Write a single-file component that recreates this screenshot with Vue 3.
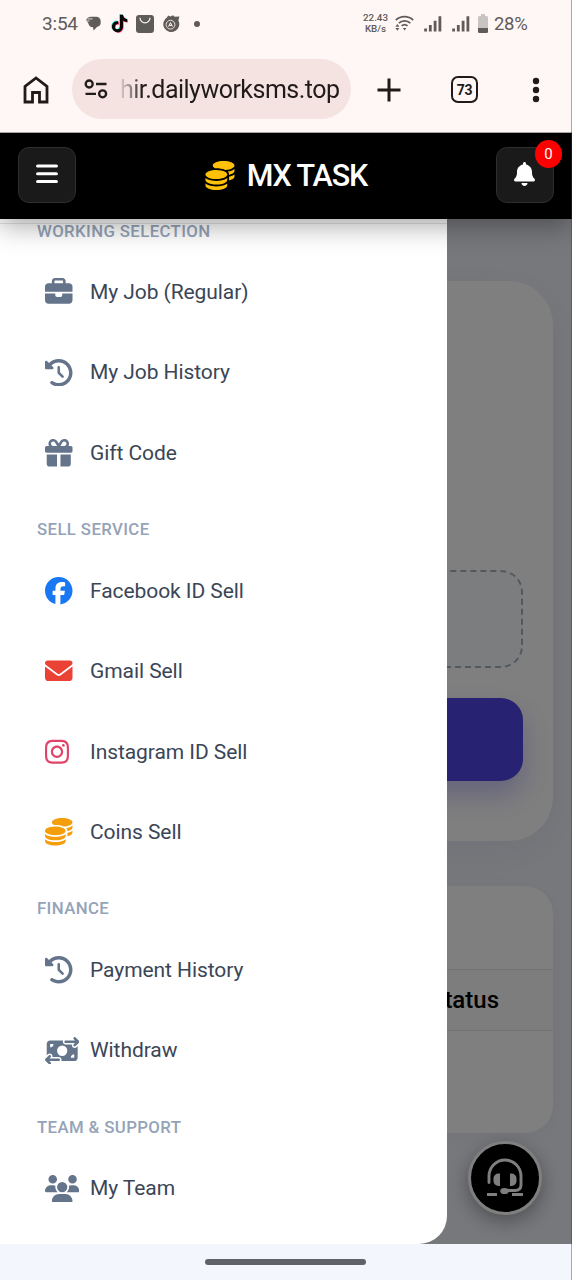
<script setup>
const icons = {
  briefcase: { w: 512, d: 'M184 48H328c4.4 0 8 3.6 8 8V96H176V56c0-4.4 3.6-8 8-8zm-56 8V96H64C28.7 96 0 124.7 0 160v96H192 320 512V160c0-35.3-28.7-64-64-64H384V56c0-30.9-25.1-56-56-56H184c-30.9 0-56 25.1-56 56zM512 288H320v32c0 17.7-14.3 32-32 32H224c-17.7 0-32-14.3-32-32V288H0V416c0 35.3 28.7 64 64 64H448c35.3 0 64-28.7 64-64V288z' },
  history: { w: 512, d: 'M75 75L41 41C25.9 25.9 0 36.6 0 57.9V168c0 13.3 10.7 24 24 24H134.1c21.4 0 32.1-25.9 17-41l-30.8-30.8C155 85.5 203 64 256 64c106 0 192 86 192 192s-86 192-192 192c-40.8 0-78.6-12.7-109.7-34.4c-14.5-10.1-34.4-6.6-44.6 7.9s-6.6 34.4 7.9 44.6C151.2 495 201.7 512 256 512c141.4 0 256-114.6 256-256S397.4 0 256 0C185.3 0 121.3 28.7 75 75zm181 53c-13.3 0-24 10.7-24 24V256c0 6.4 2.5 12.5 7 17l72 72c9.4 9.4 24.6 9.4 33.9 0s9.4-24.6 0-33.9l-65-65V152c0-13.3-10.7-24-24-24z' },
  gift: { w: 512, d: 'M190.5 68.8L225.3 128H224 152c-22.1 0-40-17.9-40-40s17.9-40 40-40h2.2c14.9 0 28.8 7.9 36.3 20.8zM64 88c0 14.4 3.5 28 9.6 40H32c-17.7 0-32 14.3-32 32v64c0 17.7 14.3 32 32 32H480c17.7 0 32-14.3 32-32V160c0-17.7-14.3-32-32-32H438.4c6.1-12 9.6-25.6 9.6-40c0-48.6-39.4-88-88-88h-2.2c-31.9 0-61.5 16.9-77.7 44.4L256 85.5l-24.1-41C215.7 16.9 186.1 0 154.2 0H152C103.4 0 64 39.4 64 88zm336 0c0 22.1-17.9 40-40 40H288h-1.3l34.8-59.2C329.1 55.9 342.9 48 357.8 48H360c22.1 0 40 17.9 40 40zM32 288V464c0 26.5 21.5 48 48 48H224V288H32zM288 512H432c26.5 0 48-21.5 48-48V288H288V512z' },
  facebook: { w: 512, d: 'M512 256C512 114.6 397.4 0 256 0S0 114.6 0 256C0 376 82.7 476.8 194.2 504.5V334.2H141.4V256h52.8V222.3c0-87.1 39.4-127.5 125-127.5c16.2 0 44.2 3.2 55.7 6.4V172c-6-.6-16.5-1-29.6-1c-42 0-58.2 15.9-58.2 57.2V256h83.6l-14.4 78.2H287V510.1C413.8 494.8 512 386.9 512 256h0z' },
  envelope: { w: 512, d: 'M48 64C21.5 64 0 85.5 0 112c0 15.1 7.1 29.3 19.2 38.4L236.8 313.6c11.4 8.5 27 8.5 38.4 0L492.8 150.4c12.1-9.1 19.2-23.3 19.2-38.4c0-26.5-21.5-48-48-48H48zM0 176V384c0 35.3 28.7 64 64 64H448c35.3 0 64-28.7 64-64V176L294.4 339.2c-22.8 17.1-54 17.1-76.8 0L0 176z' },
  instagram: { w: 448, d: 'M224.1 141c-63.6 0-114.9 51.3-114.9 114.9s51.3 114.9 114.9 114.9S339 319.5 339 255.9 287.7 141 224.1 141zm0 189.6c-41.1 0-74.7-33.5-74.7-74.7s33.5-74.7 74.7-74.7 74.7 33.5 74.7 74.7-33.6 74.7-74.7 74.7zm146.4-194.3c0 14.9-12 26.8-26.8 26.8-14.9 0-26.8-12-26.8-26.8s12-26.8 26.8-26.8 26.8 12 26.8 26.8zm76.1 27.2c-1.7-35.9-9.9-67.7-36.2-93.9-26.2-26.2-58-34.4-93.9-36.2-37-2.1-147.9-2.1-184.9 0-35.8 1.7-67.6 9.9-93.9 36.1s-34.4 58-36.2 93.9c-2.1 37-2.1 147.9 0 184.9 1.7 35.9 9.9 67.7 36.2 93.9s58 34.4 93.9 36.2c37 2.1 147.9 2.1 184.9 0 35.9-1.7 67.7-9.9 93.9-36.2 26.2-26.2 34.4-58 36.2-93.9 2.1-37 2.1-147.8 0-184.8zM398.8 388c-7.8 19.6-22.9 34.7-42.6 42.6-29.5 11.7-99.5 9-132.1 9s-102.7 2.6-132.1-9c-19.6-7.8-34.7-22.9-42.6-42.6-11.7-29.5-9-99.5-9-132.1s-2.6-102.7 9-132.1c7.8-19.6 22.9-34.7 42.6-42.6 29.5-11.7 99.5-9 132.1-9s102.7-2.6 132.1 9c19.6 7.8 34.7 22.9 42.6 42.6 11.7 29.5 9 99.5 9 132.1s2.7 102.7-9 132.1z' },
  coins: { w: 512, d: 'M512 80c0 18-14.3 34.6-38.4 48c-29.1 16.1-72.5 27.5-122.3 30.9c-3.7-1.8-7.4-3.5-11.3-5C300.6 137.4 248.2 128 192 128c-8.3 0-16.4 .2-24.5 .6l-1.1-.6C142.3 114.6 128 98 128 80c0-44.2 86-80 192-80S512 35.8 512 80zM160.7 161.1c10.2-.7 20.7-1.1 31.3-1.1c62.2 0 117.4 12.3 152.5 31.4C369.3 204.9 384 221.7 384 240c0 4-.7 7.9-2.1 11.7c-4.6 13.2-17 25.3-35 35.5c-.4 .2-.9 .4-1.3 .7c-35 19.4-90.8 32-153.6 32c-59.6 0-112.9-11.3-148.2-29.1c-1.9-.9-3.7-1.9-5.5-2.9C14.3 274.6 0 258 0 240c0-34.8 53.4-64.5 128-75.4c10.5-1.5 21.4-2.7 32.7-3.5zM416 240c0-21.9-10.6-39.9-24.1-53.4c28.3-4.4 54.2-11.4 76.2-20.5c16.3-6.8 31.5-15.2 43.9-25.5V176c0 19.3-16.5 37.1-43.8 50.9c-14.6 7.4-32.4 13.7-52.4 18.5c.1-1.8 .2-3.5 .2-5.3zm-32 96c0 18-14.3 34.6-38.4 48c-1.8 1-3.6 1.9-5.5 2.9C304.9 404.7 251.6 416 192 416c-62.8 0-118.6-12.6-153.6-32C14.3 370.6 0 354 0 336V300.6c12.5 10.3 27.6 18.7 43.9 25.5C83.4 342.6 135.8 352 192 352s108.6-9.4 148.1-25.9c7.8-3.2 15.3-6.9 22.4-10.9c6.1-3.4 11.8-7.2 17.2-11.2c1.5-1.1 2.9-2.3 4.3-3.4V304v5.7V336zm32 0V304 278.1c19-4.2 36.5-9.5 52.1-16c16.3-6.8 31.5-15.2 43.9-25.5V272c0 10.5-5 21-14.9 30.9c-16.3 16.3-45 29.7-81.3 38.4c.1-1.7 .2-3.5 .2-5.3zM192 448c56.2 0 108.6-9.4 148.1-25.9c16.3-6.8 31.5-15.2 43.9-25.5V432c0 44.2-86 80-192 80S0 476.2 0 432V396.6c12.5 10.3 27.6 18.7 43.9 25.5C83.4 438.6 135.8 448 192 448z' },
  transfer: { w: 640, d: 'M535 41c-9.4-9.4-9.4-24.6 0-33.9s24.6-9.4 33.9 0l64 64c4.5 4.5 7 10.6 7 17s-2.5 12.5-7 17l-64 64c-9.4 9.4-24.6 9.4-33.9 0s-9.4-24.6 0-33.9l23-23L384 112c-13.3 0-24-10.7-24-24s10.7-24 24-24l174.1 0L535 41zM105 377l-23 23L256 400c13.3 0 24 10.7 24 24s-10.7 24-24 24L81.9 448l23 23c9.4 9.4 9.4 24.6 0 33.9s-24.6 9.4-33.9 0L7 441c-4.5-4.5-7-10.6-7-17s2.5-12.5 7-17l64-64c9.4-9.4 24.6-9.4 33.9 0s9.4 24.6 0 33.9zM96 64H337.9c-3.7 7.2-5.9 15.3-5.9 24c0 28.7 23.3 52 52 52l117.4 0c-4 17 .6 35.5 13.8 48.8c20.3 20.3 53.2 20.3 73.5 0L608 169.5V384c0 35.3-28.7 64-64 64H302.1c3.7-7.2 5.9-15.3 5.9-24c0-28.7-23.3-52-52-52l-117.4 0c4-17-.6-35.5-13.8-48.8c-20.3-20.3-53.2-20.3-73.5 0L32 342.5V128c0-35.3 28.7-64 64-64zm64 64H96v64c35.3 0 64-28.7 64-64zM544 320c-35.3 0-64 28.7-64 64h64V320zM320 352a96 96 0 1 0 0-192 96 96 0 1 0 0 192z' },
  users: { w: 640, d: 'M144 0a80 80 0 1 1 0 160A80 80 0 1 1 144 0zM512 0a80 80 0 1 1 0 160A80 80 0 1 1 512 0zM0 298.7C0 239.8 47.8 192 106.7 192h42.7c15.9 0 31 3.5 44.6 9.7c-1.3 7.2-1.9 14.7-1.9 22.3c0 38.2 16.8 72.5 43.3 96c-.2 0-.4 0-.7 0H21.3C9.6 320 0 310.4 0 298.7zM405.3 320c-.2 0-.4 0-.7 0c26.6-23.5 43.3-57.8 43.3-96c0-7.6-.7-15-1.9-22.3c13.6-6.3 28.7-9.7 44.6-9.7h42.7C592.2 192 640 239.8 640 298.7c0 11.8-9.6 21.3-21.3 21.3H405.3zM224 224a96 96 0 1 1 192 0 96 96 0 1 1 -192 0zM128 485.3C128 411.7 187.7 352 261.3 352H378.7C452.3 352 512 411.7 512 485.3c0 14.7-11.9 26.7-26.7 26.7H154.7c-14.7 0-26.7-11.9-26.7-26.7z' },
}

const tiktok = 'M448 209.9a210.1 210.1 0 0 1 -122.8-39.3V349.4A162.6 162.6 0 1 1 185 188.3V278.2a74.6 74.6 0 1 0 52.2 71.2V0l88 0a121.2 121.2 0 0 0 1.9 22.2h0A122.2 122.2 0 0 0 381 102.4a121.4 121.4 0 0 0 67 20.1z'

const groups = [
  { title: 'WORKING SELECTION', items: [
    { label: 'My Job (Regular)', icon: 'briefcase', tone: 'slate' },
    { label: 'My Job History', icon: 'history', tone: 'slate' },
    { label: 'Gift Code', icon: 'gift', tone: 'slate' },
  ] },
  { title: 'SELL SERVICE', items: [
    { label: 'Facebook ID Sell', icon: 'facebook', tone: 'blue' },
    { label: 'Gmail Sell', icon: 'envelope', tone: 'red' },
    { label: 'Instagram ID Sell', icon: 'instagram', tone: 'pink' },
    { label: 'Coins Sell', icon: 'coins', tone: 'amber' },
  ] },
  { title: 'FINANCE', items: [
    { label: 'Payment History', icon: 'history', tone: 'slate' },
    { label: 'Withdraw', icon: 'transfer', tone: 'slate' },
  ] },
  { title: 'TEAM & SUPPORT', items: [
    { label: 'My Team', icon: 'users', tone: 'slate' },
  ] },
]
</script>

<template>
  <div class="screen">
    <div class="status">
      <span class="clock">3:54</span>
      <svg class="s-chat" viewBox="0 0 15 15"><path d="M5 .8h5.200a4.500 4.500 0 0 1 4.500 4.500v1.200a4.500 4.500 0 0 1-3.700 4.400L7.600 14.600 7 11.200A4.600 4.600 0 0 1 2.400 7.500L.3 4.200C.6 2.200 2.600.8 5 .8z" fill="#5f5b58" /><path d="M1 5h2.500M1.500 2.900h5" stroke="#fff7f5" stroke-width=".8" /></svg>
      <svg class="s-tiktok" viewBox="-24 -24 496 560"><path :d="tiktok" fill="#25e5dc" transform="translate(-18 -16)" /><path :d="tiktok" fill="#f8265a" transform="translate(18 16)" /><path :d="tiktok" fill="#080808" /></svg>
      <svg class="s-bag" viewBox="0 0 18 18"><rect width="18" height="18" rx="3" fill="#5f5b58" /><path d="M4 2.800a5 5 0 0 0 10 0" fill="none" stroke="#fff7f5" stroke-width="1.200" /></svg>
      <svg class="s-ring" viewBox="0 0 18 18"><path d="M5.200 2.200L6 .4l2.500 1L11 .2l1.600 1.600 4.800-.4-1 4a8 8 0 1 1-11.200-3.200z" fill="#5f5b58" /><circle cx="8.500" cy="9.700" r="4.400" fill="none" stroke="#e8dfdc" stroke-width="1" /><path d="M6.600 11.600l1.900-4 1.900 4M7.200 10.400h2.600" fill="none" stroke="#fff7f5" stroke-width="1" /></svg>
      <span class="s-dot"></span>
      <span class="spacer"></span>
      <span class="speed"><span>22.43</span><span>KB/s</span></span>
      <svg class="s-wifi" viewBox="0 0 19 17"><g fill="none" stroke="#5f5b58" stroke-width="1.700"><path d="M.8 5.200a12.500 12.500 0 0 1 17.400 0" /><path d="M3.800 8.200a8.500 8.500 0 0 1 11.600 0" /><path d="M6.600 10.900a4.500 4.500 0 0 1 6 0" /></g><path d="M7.800 13h3.600l-1.800 2.400zM.4 11.700l2-2.700 2 2.700zM.4 13l2 2.800 2-2.800z" fill="#5f5b58" /></svg>
      <svg v-for="n in 2" :key="n" class="s-signal" viewBox="0 0 18 16"><path d="M.2 12.400h2.800V15.500H.2zM4.900 9h2.800v6.500H4.900zM9.700 4.800h2.800v10.700H9.700zM14.500.3h2.800v15.200h-2.800z" fill="#5f5b58" /></svg>
      <svg class="s-battery" viewBox="0 0 10 19"><path d="M3 0h4v2h1.500q1.500 0 1.500 1.500v14q0 1.500-1.500 1.500h-7Q0 19 0 17.500v-14Q0 2 1.500 2H3z" fill="#c9c3c1" /><path d="M0 14h10v3.500q0 1.500-1.500 1.500h-7Q0 19 0 17.500z" fill="#5f5b58" /></svg>
      <span class="percent">28%</span>
    </div>

    <div class="toolbar">
      <svg class="t-home" viewBox="0 0 26 28"><path d="M2 26V10.500L13 2l11 8.500V26h-7.500v-9.500h-7V26z" fill="none" stroke="#201a19" stroke-width="2.800" /></svg>
      <div class="omnibox">
        <svg class="t-tune" viewBox="0 0 24 20"><g fill="none" stroke="#201a19" stroke-width="2.300"><circle cx="5.200" cy="5" r="3.500" /><path d="M12 5h10.500M1.500 14.800H12" /><circle cx="18.600" cy="14.800" r="3.500" /></g></svg>
        <span class="url">hir.dailyworksms.top</span>
      </div>
      <svg class="t-plus" viewBox="0 0 24 24"><path d="M12 .5v23M.5 12h23" stroke="#201a19" stroke-width="3" /></svg>
      <span class="tabs">73</span>
      <svg class="t-more" viewBox="0 0 8 26"><g fill="#201a19"><circle cx="4" cy="4" r="3.200" /><circle cx="4" cy="13" r="3.200" /><circle cx="4" cy="22" r="3.200" /></g></svg>
    </div>

    <header class="header">
      <button class="square">
        <svg class="h-bars" viewBox="0 0 22 20"><path d="M1.600 2h18.800M1.600 9.800h18.800M1.600 17.500h18.800" stroke="#fff" stroke-width="3.100" stroke-linecap="round" /></svg>
      </button>
      <div class="brand">
        <svg class="h-coins" viewBox="0 0 512 512"><path :d="icons.coins.d" /></svg>
        <span>MX TASK</span>
      </div>
      <button class="square">
        <svg class="h-bell" viewBox="0 0 448 512"><path d="M224 0c-17.700 0-32 14.300-32 32V51.200C119 66 64 130.600 64 208v18.800c0 47-17.300 92.400-48.500 127.600l-7.400 8.300c-8.400 9.400-10.400 22.900-5.300 34.400S19.400 416 32 416H416c12.600 0 24-7.400 29.200-18.900s3.100-25-5.300-34.400l-7.400-8.300C401.300 319.200 384 273.900 384 226.800V208c0-77.400-55-142-128-156.800V32c0-17.700-14.300-32-32-32zm45.300 493.300c12-12 18.700-28.300 18.700-45.300H160c0 17 6.700 33.300 18.700 45.300s28.300 18.700 45.300 18.700s33.300-6.700 45.300-18.700z" fill="#fff" /></svg>
        <span class="badge">0</span>
      </button>
    </header>

    <main class="content">
      <section class="card form-card">
        <div class="dropzone"></div>
        <div class="submit"></div>
      </section>
      <section class="card table-card">
        <div class="table-title"></div>
        <div class="table-head"><span>Status</span></div>
      </section>
      <div class="support">
        <svg viewBox="0 0 38 40"><g fill="none" stroke="#fff" stroke-width="2.900"><path d="M3 24.500V18a16 16 0 0 1 32 0v9q0 5.500-6 5.500H19" stroke-linecap="round" /><path d="M1 36.500h10M26 36.500h11" stroke-width="3" /></g><path d="M14 15.500v12.500h-1.500a5 5 0 0 1-5-5v-2.500a5 5 0 0 1 5-5zM24 15.500v12.500h1.500a5 5 0 0 0 5-5v-2.500a5 5 0 0 0-5-5z" fill="#fff" /><ellipse cx="18.500" cy="33" rx="4.300" ry="3.100" fill="#fff" /></svg>
      </div>
      <div class="scrim"></div>
      <aside class="drawer">
        <div class="drawer-edge"></div>
        <nav class="menu">
          <div v-for="g in groups" :key="g.title">
            <h3>{{ g.title }}</h3>
            <a v-for="i in g.items" :key="i.label" class="item">
              <span class="icon" :class="i.tone">
                <svg :class="'w' + icons[i.icon].w" :viewBox="`0 0 ${icons[i.icon].w} 512`"><path :d="icons[i.icon].d" /></svg>
              </span>
              <span class="label">{{ i.label }}</span>
            </a>
          </div>
        </nav>
      </aside>
    </main>

    <footer class="gesture"><span></span></footer>
    <div class="edge"></div>
  </div>
</template>

<style>
body { margin: 0; }
</style>

<style scoped>
.screen { position: relative; width: 572px; height: 1280px; display: flex; flex-direction: column; overflow: hidden; font-family: Roboto, sans-serif; background: #fff7f5; }
.screen * { box-sizing: border-box; }
svg { display: block; flex: none; }
.spacer { flex: 1; }

.status { height: 47px; flex: none; display: flex; align-items: center; padding: 0 44px 0 42px; color: #5f5b58; }
.clock { font-size: 19px; width: 44px; letter-spacing: -0.2px; }
.s-chat { width: 15px; height: 15px; }
.s-tiktok { width: 17px; height: 19px; margin-left: 10px; }
.s-bag { width: 18px; height: 18px; margin-left: 8px; }
.s-ring { width: 18px; height: 18px; margin-left: 8px; }
.s-dot { width: 6px; height: 6px; border-radius: 50%; background: #5f5b58; margin-left: 14px; }
.speed { display: flex; flex-direction: column; align-items: center; font-size: 9.8px; line-height: 10.5px; font-weight: 500; }
.s-wifi { width: 19px; height: 17px; margin-left: 7px; }
.s-signal { width: 18px; height: 16px; margin-left: 10px; }
.s-battery { width: 10px; height: 19px; margin-left: 8px; }
.percent { font-size: 18.5px; width: 34px; margin-left: 6px; white-space: nowrap; letter-spacing: -0.3px; }

.toolbar { position: relative; z-index: 4; background: #fff7f5; height: 85px; flex: none; display: flex; align-items: center; padding: 0 31px 0 23px; color: #201a19; }
.t-home { width: 26px; height: 28px; }
.omnibox { width: 279px; height: 60px; margin: -1px 0 0 23px; border-radius: 30px; background: #f5e3e2; display: flex; align-items: center; padding-left: 12px; flex: none; }
.t-tune { width: 24px; height: 20px; }
.url { font-size: 25px; letter-spacing: -0.52px; margin-left: 12px; color: transparent; background: linear-gradient(90deg, rgba(32,26,25,.1), rgba(32,26,25,.5) 12px, #201a19 22px); background-clip: text; -webkit-background-clip: text; white-space: nowrap; }
.t-plus { width: 24px; height: 24px; margin-left: 26px; }
.tabs { width: 27px; height: 27px; margin-left: 50px; border: 2.5px solid #201a19; border-radius: 7px; display: flex; align-items: center; justify-content: center; font-size: 14px; letter-spacing: -0.3px; font-weight: 700; flex: none; }
.t-more { width: 8px; height: 26px; margin-left: 54px; }

.header { height: 87px; flex: none; position: relative; z-index: 3; background: #000; border-top: 1px solid #aaa5a4; display: flex; align-items: center; justify-content: space-between; padding: 0 18px 2px; box-shadow: 0 6px 26px rgba(0, 0, 0, .36); }
.square { position: relative; width: 58px; height: 56px; padding: 0; border: 1px solid #2e2e2e; border-radius: 11px; background: #1a1a1a; display: flex; align-items: center; justify-content: center; }
.h-bars { width: 22px; height: 20px; margin-bottom: 3px; }
.h-bell { width: 21px; height: 24px; margin-bottom: 3px; }
.badge { position: absolute; right: -9px; top: -8px; width: 27px; height: 28px; border-radius: 50%; background: #f00; color: #fff; font-size: 15px; display: flex; align-items: center; justify-content: center; font-family: Roboto, sans-serif; }
.brand { display: flex; align-items: center; gap: 12px; color: #fff; font-size: 30.5px; font-weight: 500; letter-spacing: -1.1px; }
.h-coins { width: 30px; height: 29px; fill: #ffc107; }

.content { height: 1025px; flex: none; position: relative; overflow: hidden; background: #eff1f8; padding: 62px 19px 0 18px; }
.card { background: #fff; }
.form-card { height: 560px; border-radius: 44px; padding: 289px 30px 0; box-shadow: 0 10px 40px rgba(30, 40, 80, .06); }
.dropzone { height: 98px; border: 2px dashed #a9b0ba; border-radius: 22px; background: #f8fafc; }
.submit { height: 83px; margin-top: 30px; border-radius: 22px; background: linear-gradient(135deg, #6366f1, #4f46e5 70%, #4f46e5); box-shadow: 0 14px 28px rgba(79, 70, 229, .3); }
.table-card { height: 247px; margin-top: 45px; border-radius: 28px; box-shadow: 0 4px 20px rgba(30, 40, 80, .04); }
.table-title { height: 83px; }
.table-head { height: 62px; border-top: 1px solid #e6e6e6; border-bottom: 1px solid #e6e6e6; background: #fafafa; display: flex; align-items: center; justify-content: flex-end; padding-right: 54px; font-size: 24px; font-weight: 500; color: #000; }
.support { position: absolute; left: 468px; top: 922px; width: 74px; height: 74px; border-radius: 50%; border: 3px solid #fff; background: #000; box-shadow: 0 6px 20px rgba(0, 0, 0, .35); display: flex; align-items: center; justify-content: center; }
.support svg { width: 38px; height: 40px; }
.scrim { position: absolute; inset: 0; background: rgba(0, 0, 0, .5); }
.drawer { position: absolute; left: 0; top: 0; bottom: 0; width: 447px; background: #fff; border-bottom-right-radius: 28px; overflow: hidden; }
.drawer-edge { height: 5px; border-bottom: 1px solid #e2e4e8; }
.menu { margin-top: -29.8px; }
.menu h3 { margin: 0; height: 57.6px; padding: 15px 0 0 37px; display: flex; align-items: center; font-size: 16.8px; font-weight: 500; letter-spacing: 0.38px; color: #94a3b8; }
.item { height: 80.4px; display: flex; align-items: center; padding-left: 45px; color: #3a4656; }
.icon { width: 45px; flex: none; }
.icon svg { height: 27.5px; fill: currentColor; }
.icon .w448 { width: 24px; }
.icon .w512 { width: 27.5px; }
.icon .w640 { width: 34.4px; }
.label { font-size: 21px; letter-spacing: -0.07px; }
.slate { color: #64748b; }
.blue { color: #1877f2; }
.red { color: #ea4335; }
.pink { color: #e1436a; }
.amber { color: #f59e0b; }

.gesture { height: 36px; flex: none; background: #f3f6fd; display: flex; align-items: center; justify-content: center; padding-right: 1px; }
.gesture span { width: 161px; height: 6px; border-radius: 3px; background: #5f6368; }
.edge { position: absolute; right: 0; top: 0; bottom: 0; width: 1px; z-index: 5; background: rgba(60, 60, 60, .42); }
</style>
